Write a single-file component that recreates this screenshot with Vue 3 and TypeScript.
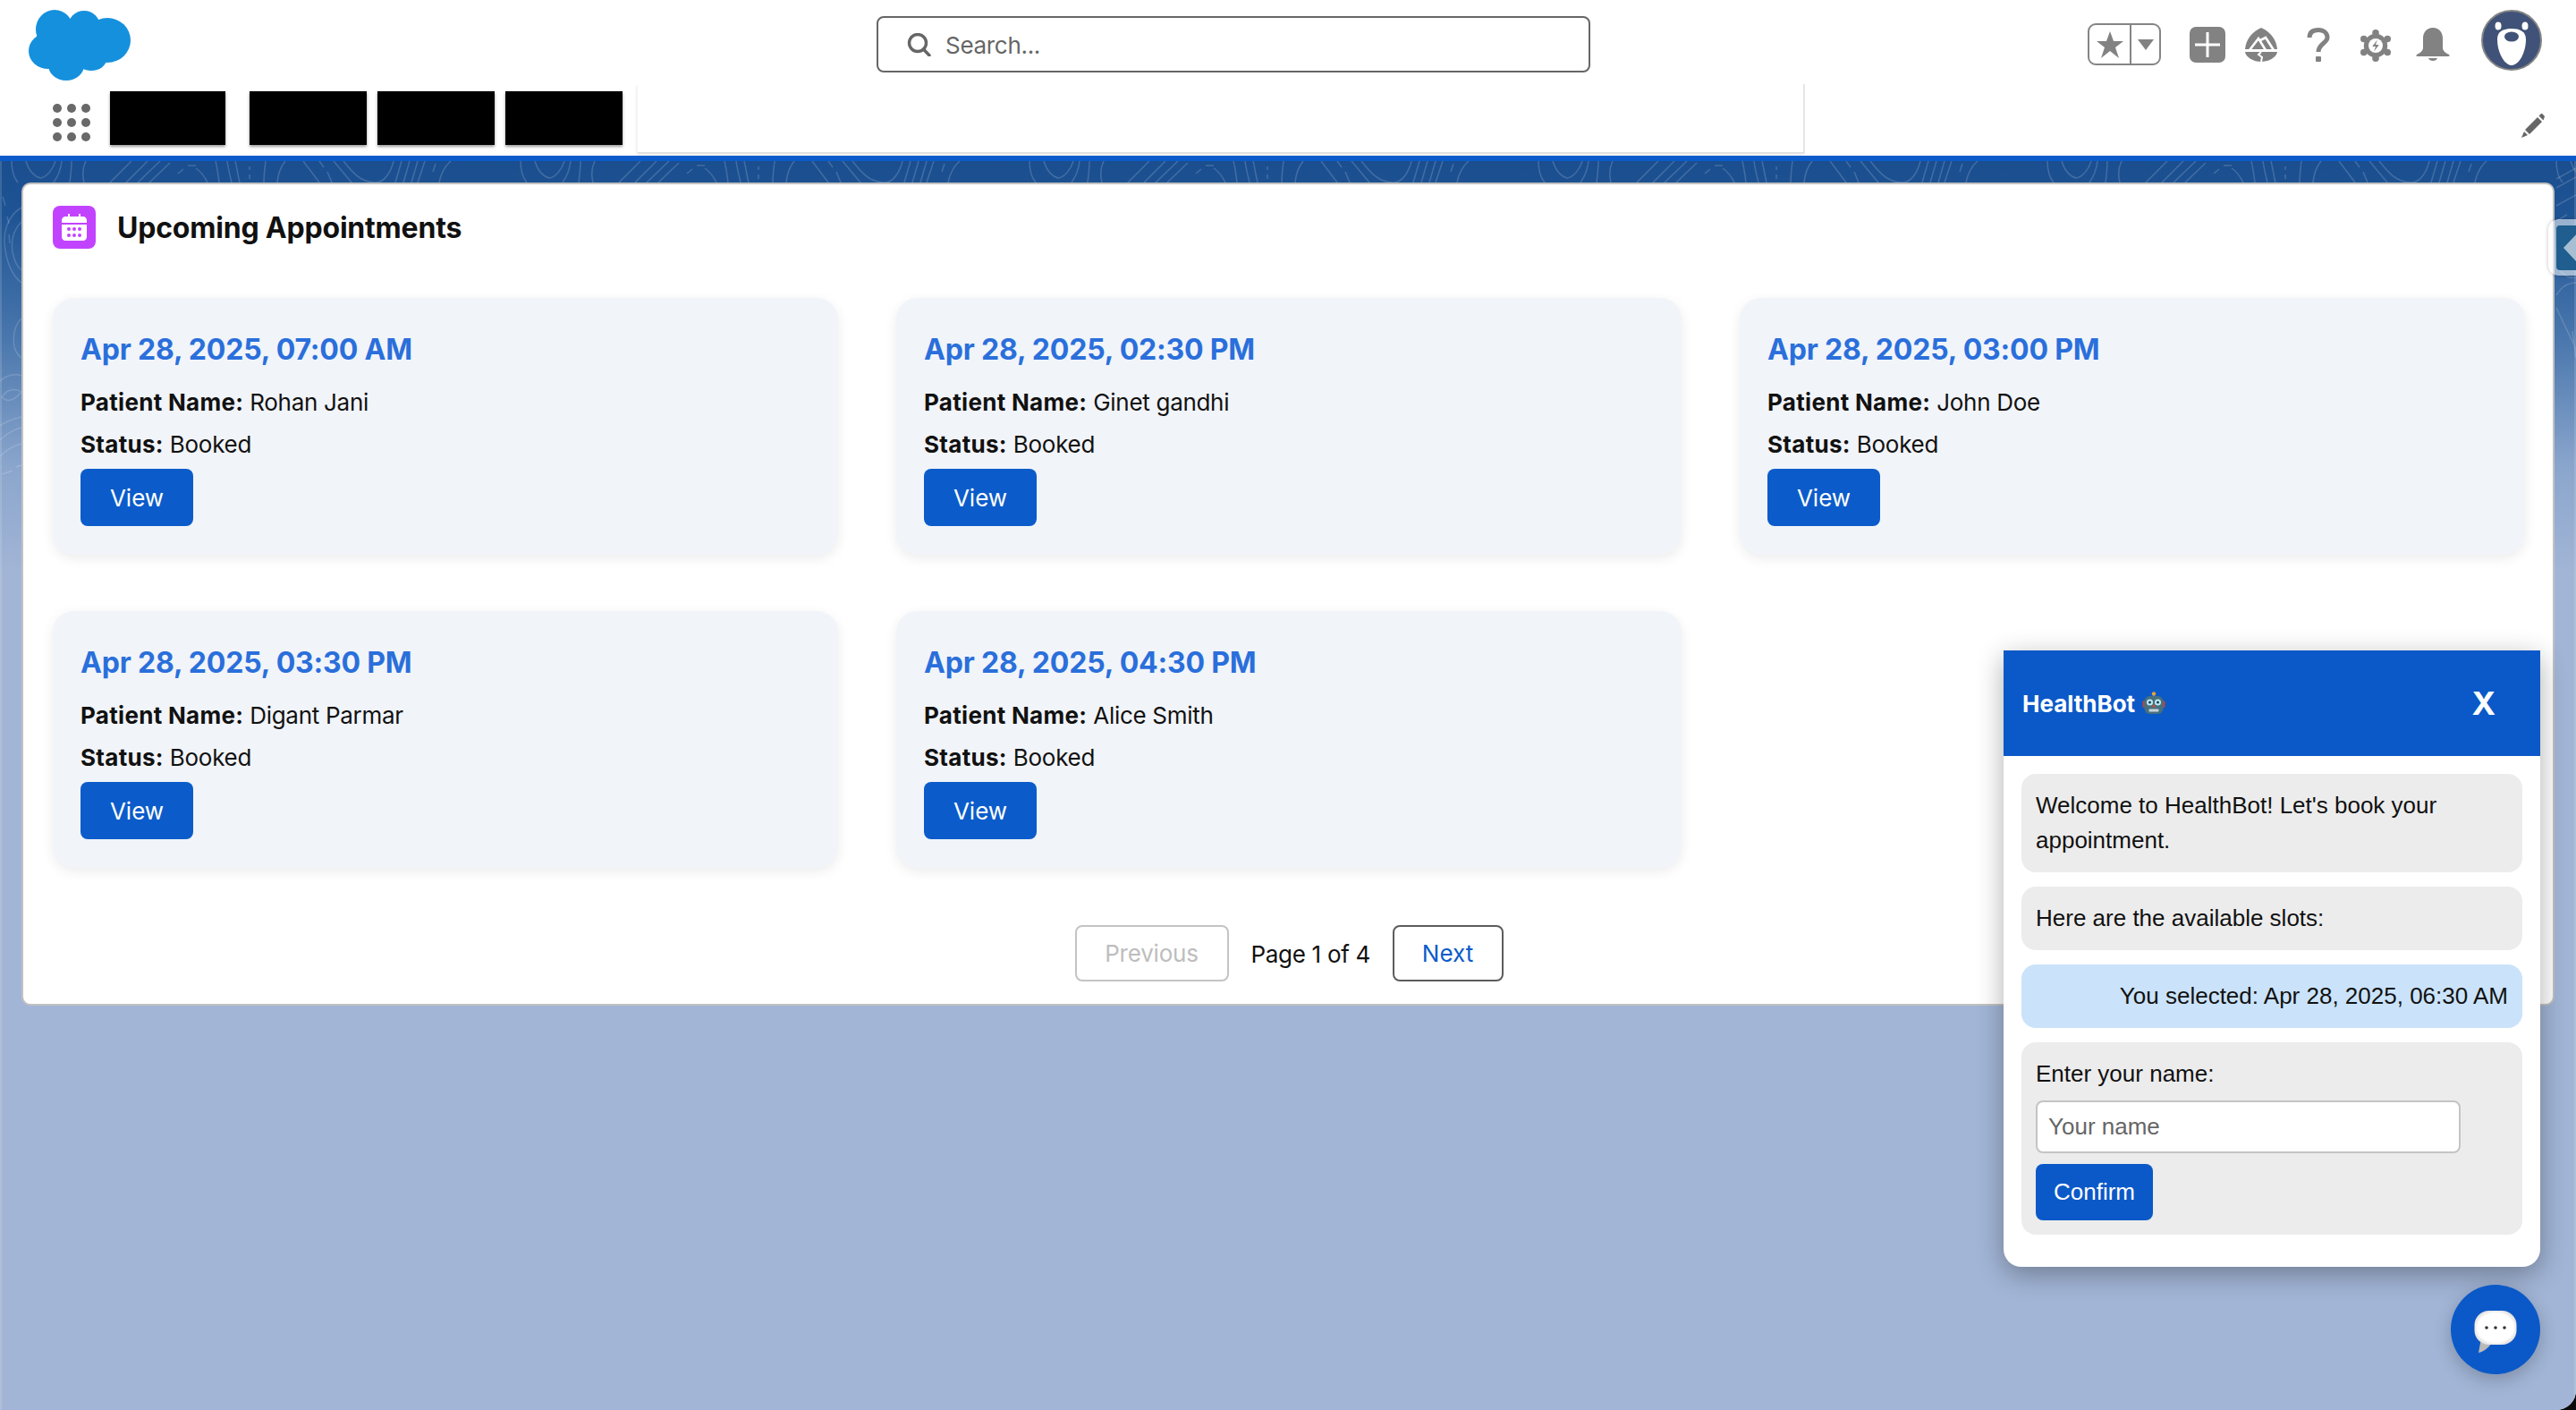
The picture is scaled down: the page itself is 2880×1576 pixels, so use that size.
<script setup lang="ts">
interface Appointment {
  when: string
  patient: string
  status: string
}

const appointments: Appointment[] = [
  { when: 'Apr 28, 2025, 07:00 AM', patient: 'Rohan Jani', status: 'Booked' },
  { when: 'Apr 28, 2025, 02:30 PM', patient: 'Ginet gandhi', status: 'Booked' },
  { when: 'Apr 28, 2025, 03:00 PM', patient: 'John Doe', status: 'Booked' },
  { when: 'Apr 28, 2025, 03:30 PM', patient: 'Digant Parmar', status: 'Booked' },
  { when: 'Apr 28, 2025, 04:30 PM', patient: 'Alice Smith', status: 'Booked' }
]

const redactedTabs = ['first', 'second', 'third', 'fourth']
const dots = Array.from({ length: 9 }, (_, i) => i)

// contour lines of the blue band, one repeat of the pattern
const topoTile = [
  'M13 0C13 10 15 18 20 24',
  'M29 0C32 10 38 17 45 19C52 18 59 10 62 0',
  'M69 0C68 9 65 17 60 24',
  'M80 0C80 8 79 16 78 24',
  'M96 0C92 8 92 16 94 24',
  'M147 0L123 24', 'M165 0L141 24', 'M179 0L154 24', 'M190 2L167 24',
  'M199 14L205 9', 'M210 5H219', 'M219 8C225 12 229 18 232 24',
  'M241 0C243 8 244 16 245 24', 'M254 0C255 8 257 16 259 24', 'M263 0C265 8 266 16 268 24',
  'M279 6V10', 'M279 15V20',
  'M297 0C296 8 295 16 295 24', 'M319 0C314 6 311 14 310 24',
  'M339 0L357 24', 'M357 0L362 7', 'M366 12L371 24', 'M373 0L393 24',
  'M384 0C392 10 402 24 420 24C430 24 437 12 440 0',
  'M449 0L442 24', 'M458 0L451 24', 'M467 0L460 24', 'M475 0L467 24',
  'M487 3L484 12', 'M504 0C497 6 493 14 491 24'
]
</script>

<template>
  <div class="app">
    <header class="top">
      <svg class="logo" width="114" height="80" viewBox="0 0 114 80">
        <g fill="#1590dd">
          <ellipse cx="29" cy="23" rx="21" ry="22" />
          <ellipse cx="62" cy="20" rx="18" ry="18" />
          <ellipse cx="88" cy="35" rx="26" ry="25" />
          <ellipse cx="22" cy="47" rx="22" ry="20" />
          <ellipse cx="42" cy="63" rx="20" ry="17" />
          <ellipse cx="70" cy="56" rx="17" ry="13" />
          <ellipse cx="50" cy="40" rx="30" ry="24" />
        </g>
      </svg>
      <div class="search">
        <svg width="28" height="26" viewBox="0 0 28 26" fill="none" stroke="#666" stroke-width="3.4">
          <circle cx="12" cy="11" r="9.5" />
          <path d="M18.5 18L25 25" stroke-linecap="round" />
        </svg>
        <span>Search...</span>
      </div>
      <div class="actions">
        <div class="fav">
          <span class="fav-star">
            <svg width="32" height="32" viewBox="0 0 32 32"><polygon fill="#828282" points="16,1 20,12 31,12 22,19 26,31 16,23 6,31 10,19 1,12 12,12" /></svg>
          </span>
          <span class="fav-more">
            <svg width="18" height="12" viewBox="0 0 18 12"><polygon fill="#828282" points="0,0 18,0 9,12" /></svg>
          </span>
        </div>
        <svg class="ic-plus" width="40" height="40" viewBox="0 0 40 40">
          <rect width="40" height="40" rx="7" fill="#828282" />
          <path d="M6 20H34M20 6V34" stroke="#fff" stroke-width="3" />
        </svg>
        <svg class="ic-peak" width="38" height="38" viewBox="0 0 38 38">
          <path fill="#828282" d="M19 0C28 4 36 12 37 24H1C2 12 10 4 19 0Z" />
          <path fill="#828282" d="M1 27H37C36 33 28 38 19 38C10 38 2 33 1 27Z" />
          <path fill="none" stroke="#fff" stroke-width="2.6" d="M6 25L16 12L24 25M18 14L24 11L33 25" />
          <path fill="none" stroke="#fff" stroke-width="2" d="M19 27L16 30L20 33L19 38" />
        </svg>
        <svg class="ic-help" width="26" height="38" viewBox="0 0 26 38">
          <path fill="none" stroke="#828282" stroke-width="5" d="M3 11C3 5 7 2.500 13 2.500C19 2.500 23 6 23 11C23 17 13 18 13 27" />
          <rect x="10" y="32" width="6" height="6" rx="1" fill="#828282" />
        </svg>
        <svg class="ic-gear" width="34" height="38" viewBox="0 0 36 38">
          <circle cx="18" cy="19" r="14" fill="#828282" />
          <circle cx="18" cy="4" r="4" fill="#828282" />
          <circle cx="18" cy="34" r="4" fill="#828282" />
          <circle cx="4" cy="11" r="4" fill="#828282" />
          <circle cx="32" cy="11" r="4" fill="#828282" />
          <circle cx="4" cy="27" r="4" fill="#828282" />
          <circle cx="32" cy="27" r="4" fill="#828282" />
          <circle cx="18" cy="19" r="8.500" fill="#fff" />
          <polygon fill="#828282" points="20,12 14,20 18,20 16,26 22,18 18,18" />
        </svg>
        <svg class="ic-bell" width="38" height="38" viewBox="0 0 38 38">
          <path fill="#828282" d="M19 0C26 0 30 5 30 12V22C30 26 33 28 37 30C38 31 38 32 36 32H2C0 32 0 31 1 30C5 28 8 26 8 22V12C8 5 12 0 19 0Z" />
          <path fill="#828282" d="M14 34H24C23 38 15 38 14 34Z" />
        </svg>
        <svg class="avatar" width="68" height="68" viewBox="0 0 68 68">
          <circle cx="34" cy="34" r="33" fill="#405277" stroke="#858585" stroke-width="2" />
          <ellipse cx="19" cy="18" rx="3.500" ry="4.500" fill="#fff" />
          <ellipse cx="49" cy="18" rx="3.500" ry="4.500" fill="#fff" />
          <path fill="#fff" d="M34 21C43 21 50 24 50 33C50 48 42 62 34 62C26 62 18 48 18 33C18 24 25 21 34 21Z" />
          <ellipse cx="34" cy="30" rx="8" ry="5.500" fill="#405277" />
        </svg>
      </div>
    </header>

    <nav class="nav">
      <div class="launcher">
        <span v-for="d in dots" :key="d" class="dot"></span>
      </div>
      <div class="tabs">
        <span v-for="t in redactedTabs" :key="t" class="redacted" :class="t"></span>
      </div>
      <div class="tab-panel"></div>
      <svg class="pencil" width="26" height="27" viewBox="0 0 26 27">
        <path fill="#666" d="M4 18L18 4L23 9L9 23ZM19.500 2.500L21.500 0.500C22.200 -0.100 23 -0.100 23.600 0.500L25.500 2.400C26.100 3 26.100 3.800 25.500 4.500L24.500 7.500ZM3 20L7 24L0 27Z" />
      </svg>
    </nav>
    <div class="accent"></div>

    <main class="page">
      <svg class="topo" width="2880" height="1000" fill="none">
        <defs>
          <pattern id="topo-band" width="569" height="24" patternUnits="userSpaceOnUse">
            <path v-for="(d, i) in topoTile" :key="i" :d="d" stroke="#fff" stroke-opacity="0.17" stroke-width="1.500" />
          </pattern>
        </defs>
        <rect width="2880" height="24" fill="url(#topo-band)" />
        <g stroke="#fff" stroke-opacity="0.16" stroke-width="1.500">
          <path d="M24 52C10 60 2 78 6 100C9 118 16 130 24 136" />
          <path d="M24 68C16 76 12 88 14 102C16 112 19 118 24 122" />
          <path d="M3 40L6 50M8 62L10 70M10 82L11 92" />
          <path d="M24 176C17 182 14 194 16 208C18 214 21 218 24 220" />
          <path d="M0 246C8 238 18 238 24 240M2 264C8 254 18 254 24 258C16 268 8 270 2 264Z" />
          <path d="M0 296C8 290 16 288 24 286M0 312C8 304 16 300 24 298M0 330C8 322 16 318 24 316M2 350L14 346M18 342L24 340" />
          <path d="M2858 30L2880 18M2858 50L2880 38M2860 66L2870 60M2858 20L2880 8" />
          <path d="M2858 150C2864 140 2872 136 2880 136M2858 118C2866 128 2874 132 2880 130" />
          <path d="M2858 164L2880 210M2876 190L2880 220" />
        </g>
      </svg>

      <section class="board">
        <div class="board-head">
          <span class="cal">
            <svg width="28" height="30" viewBox="0 0 28 30">
              <path fill="#fff" d="M7 0H9V3H19V0H21V3H24C26 3 28 5 28 7V10H0V7C0 5 2 3 4 3H7Z" />
              <path fill="#fff" d="M0 12H28V26C28 28 26 30 24 30H4C2 30 0 28 0 26Z" />
              <g fill="#c243ff">
                <circle cx="8" cy="17" r="2" />
                <circle cx="14" cy="17" r="2" />
                <circle cx="20" cy="17" r="2" />
                <circle cx="8" cy="24" r="2" />
                <circle cx="14" cy="24" r="2" />
                <circle cx="20" cy="24" r="2" />
              </g>
            </svg>
          </span>
          <h1>Upcoming Appointments</h1>
        </div>

        <div class="grid">
          <article v-for="a in appointments" :key="a.when" class="appt">
            <h2>{{ a.when }}</h2>
            <p><strong>Patient Name:</strong> {{ a.patient }}</p>
            <p><strong>Status:</strong> {{ a.status }}</p>
            <button class="view" type="button">View</button>
          </article>
        </div>

        <div class="pager">
          <button class="pg prev" type="button">Previous</button>
          <span class="pg-label">Page 1 of 4</span>
          <button class="pg next" type="button">Next</button>
        </div>
      </section>

      <div class="handle"><span class="handle-in"><i></i></span></div>
    </main>

    <aside class="chat">
      <div class="chat-head">
        <span class="chat-title">
          HealthBot
          <svg width="26" height="26" viewBox="0 0 26 26">
            <circle cx="13" cy="2.500" r="2.200" fill="#e8a33a" />
            <rect x="0.500" y="10" width="3" height="8" rx="1.500" fill="#b5483d" />
            <rect x="22.500" y="10" width="3" height="8" rx="1.500" fill="#b5483d" />
            <rect x="2.500" y="5" width="21" height="20" rx="6" fill="#47707f" />
            <circle cx="8.500" cy="12" r="3.500" fill="#bdeaf5" />
            <circle cx="17.500" cy="12" r="3.500" fill="#bdeaf5" />
            <circle cx="8.500" cy="12" r="1.500" fill="#1b3f4c" />
            <circle cx="17.500" cy="12" r="1.500" fill="#1b3f4c" />
            <polygon points="13,14 15,17.500 11,17.500" fill="#d9473b" />
            <rect x="7.500" y="19.500" width="11" height="3" rx="1" fill="#c7d3d6" />
          </svg>
        </span>
        <span class="chat-close">X</span>
      </div>
      <div class="chat-body">
        <div class="bubble">Welcome to HealthBot! Let's book your appointment.</div>
        <div class="bubble">Here are the available slots:</div>
        <div class="bubble mine">You selected: Apr 28, 2025, 06:30 AM</div>
        <div class="bubble">
          <label for="bot-name">Enter your name:</label>
          <input id="bot-name" type="text" placeholder="Your name" />
          <button class="confirm" type="button">Confirm</button>
        </div>
      </div>
    </aside>

    <button class="fab" type="button" aria-label="Open chat">
      <svg width="48" height="50" viewBox="0 0 48 50">
        <defs>
          <radialGradient id="fab-bubble" cx="50%" cy="50%" r="60%">
            <stop offset="70%" stop-color="#fff" />
            <stop offset="100%" stop-color="#cfcfcf" />
          </radialGradient>
        </defs>
        <path fill="#b9b9b9" d="M8 32L5 48C10 47 16 43 19 38Z" />
        <rect x="0.500" y="1" width="47" height="38" rx="16" fill="url(#fab-bubble)" />
        <circle cx="14" cy="20" r="1.800" fill="#333" />
        <circle cx="24" cy="20" r="1.800" fill="#333" />
        <circle cx="34" cy="20" r="1.800" fill="#333" />
      </svg>
    </button>
  </div>
</template>

<style scoped>
.app {
  position: relative;
  width: 2880px;
  height: 1576px;
  display: flex;
  flex-direction: column;
  overflow: hidden;
  background: #fff;
  border-bottom-right-radius: 22px;
  font-family: Inter, "Liberation Sans", sans-serif;
  color: #111;
}

.top {
  height: 94px;
  flex: none;
  display: grid;
  grid-template-columns: 980px 798px 1fr;
  align-items: center;
}

.logo {
  margin-left: 32px;
  margin-top: 6px;
}

.search {
  height: 63px;
  box-sizing: border-box;
  margin-top: 5px;
  padding-left: 32px;
  display: flex;
  align-items: center;
  gap: 15px;
  border: 2px solid #666;
  border-radius: 8px;
  font-size: 26px;
  letter-spacing: -0.3px;
  color: #666;
}

.search span {
  position: relative;
  top: 1px;
}

.actions {
  display: flex;
  align-items: center;
  justify-content: flex-end;
  padding-right: 38px;
}

.fav {
  width: 82px;
  height: 47px;
  box-sizing: border-box;
  margin-top: 5px;
  display: flex;
  border: 2px solid #858585;
  border-radius: 9px;
}

.fav-star {
  width: 45px;
  display: flex;
  align-items: center;
  justify-content: center;
  border-right: 2px solid #858585;
}

.fav-more {
  flex: 1;
  display: flex;
  align-items: center;
  justify-content: center;
}

.ic-plus { margin-left: 32px; margin-top: 6px; }
.ic-peak { margin-left: 21px; margin-top: 6px; }
.ic-help { margin-left: 32px; margin-top: 6px; }
.ic-gear { margin-left: 34px; margin-top: 8px; }
.ic-bell { margin-left: 28px; margin-top: 5px; }
.avatar { margin-left: 35px; margin-top: -4px; }

.nav {
  height: 80px;
  flex: none;
  display: flex;
  align-items: flex-start;
}

.launcher {
  width: 42px;
  margin: 22px 0 0 59px;
  display: grid;
  grid-template-columns: repeat(3, 10px);
  column-gap: 6px;
  row-gap: 6px;
}

.dot {
  height: 10px;
  border-radius: 50%;
  background: #696969;
}

.tabs {
  margin: 8px 0 0 22px;
  display: flex;
  gap: 12px;
}

.redacted {
  width: 131px;
  height: 60px;
  background: #000;
  box-shadow: 0 2px 3px rgba(0, 0, 0, 0.4);
}

.redacted.first {
  width: 129px;
  margin-right: 15px;
}

.tab-panel {
  width: 1305px;
  height: 78px;
  margin-left: 17px;
  box-sizing: border-box;
  border-right: 2px solid #e6e6e6;
  border-bottom: 2px solid #e0e0e0;
  box-shadow: -2px 2px 3px rgba(0, 0, 0, 0.06);
}

.pencil {
  margin: 33px 0 0 801px;
}

.accent {
  height: 6px;
  flex: none;
  background: #0b5cca;
}

.page {
  position: relative;
  flex: 1;
  padding: 24px;
  background: linear-gradient(180deg, #1a4e8f 0, #1f5494 60px, #4a77ad 200px, #8aa5cc 340px, #a2b5d6 460px, #a2b5d6 100%);
  box-shadow: inset 2px 0 0 rgba(255, 255, 255, 0.14), inset -2px 0 0 rgba(255, 255, 255, 0.14);
}

.topo {
  position: absolute;
  left: 0;
  top: 0;
}

.board {
  position: relative;
  background: #fff;
  border: 2px solid #c2c2c2;
  border-radius: 10px;
  padding: 24px 31px 25px 33px;
}

.board-head {
  display: flex;
  align-items: center;
  gap: 24px;
  margin-bottom: 55px;
}

.cal {
  width: 48px;
  height: 48px;
  display: flex;
  align-items: center;
  justify-content: center;
  border-radius: 8px;
  background: #c243ff;
}

h1 {
  margin: 0;
  padding-top: 2px;
  font-size: 32px;
  font-weight: 700;
  line-height: 46px;
  letter-spacing: -0.2px;
}

.grid {
  display: grid;
  grid-template-columns: repeat(3, 1fr);
  column-gap: 65px;
  row-gap: 63px;
}

.appt {
  height: 287px;
  box-sizing: border-box;
  padding: 32px 31px;
  background: #f1f4f9;
  border-radius: 24px;
  box-shadow: 0 4px 14px rgba(0, 0, 0, 0.08);
}

.appt h2 {
  margin: 0 0 13px;
  font-size: 32px;
  font-weight: 700;
  line-height: 52px;
  letter-spacing: -0.18px;
  color: #2a6fdb;
}

.appt p {
  margin: 0 0 8px;
  font-size: 26px;
  line-height: 39px;
  letter-spacing: -0.3px;
}

.appt strong {
  font-weight: 700;
  letter-spacing: 0.3px;
}

.view {
  width: 126px;
  height: 64px;
  padding: 0;
  border: none;
  border-radius: 8px;
  background: #0b5cca;
  color: #fff;
  font: 26px Inter, "Liberation Sans", sans-serif;
}

.pager {
  margin-top: 64px;
  display: flex;
  align-items: center;
  justify-content: center;
  gap: 25px;
  font-size: 26px;
}

.pg-label {
  width: 133px;
  white-space: nowrap;
  letter-spacing: -0.3px;
  position: relative;
  top: 1px;
}

.pg {
  height: 63px;
  padding: 0;
  background: #fff;
  border-radius: 8px;
  font: 26px Inter, "Liberation Sans", sans-serif;
}

.prev {
  width: 172px;
  border: 2px solid #c4c4c4;
  color: #bdbdbd;
  letter-spacing: -0.2px;
}

.next {
  width: 124px;
  border: 2px solid #5c5c5c;
  color: #0b5cca;
}

.handle {
  position: absolute;
  right: 0;
  top: 65px;
  width: 31px;
  height: 63px;
  box-sizing: border-box;
  padding: 7px 0 6px 9px;
  background: rgba(255, 255, 255, 0.55);
  border-radius: 12px 0 0 12px;
  box-shadow: 0 0 4px rgba(0, 0, 0, 0.25);
}

.handle-in {
  display: block;
  height: 100%;
  position: relative;
  overflow: hidden;
  background: #1f5e8e;
  border-radius: 4px 0 0 4px;
}

.handle-in i {
  position: absolute;
  left: 8px;
  top: 8px;
  border-style: solid;
  border-width: 17px 16px 17px 0;
  border-color: transparent rgba(225, 232, 240, 0.7) transparent transparent;
}

.chat {
  position: absolute;
  left: 2240px;
  top: 727px;
  width: 600px;
  background: #fff;
  border-radius: 0 0 20px 20px;
  box-shadow: 0 8px 30px rgba(0, 0, 0, 0.32);
  font-family: "Liberation Sans", Arial, sans-serif;
  font-size: 26px;
  line-height: 39px;
  color: #111;
}

.chat-head {
  height: 118px;
  padding: 0 50px 0 21px;
  display: flex;
  align-items: center;
  justify-content: space-between;
  background: #0b59c8;
  color: #fff;
  font-family: Inter, "Liberation Sans", sans-serif;
}

.chat-title {
  display: flex;
  align-items: center;
  gap: 8px;
  font-size: 26px;
  font-weight: 700;
}

.chat-close {
  font-size: 36px;
  font-weight: 700;
}

.chat-body {
  padding: 20px 20px 36px;
  display: flex;
  flex-direction: column;
  gap: 16px;
}

.bubble {
  padding: 16px;
  background: #ececec;
  border-radius: 16px;
}

.bubble label {
  display: block;
}

.mine {
  background: #cae3fa;
  text-align: right;
}

.bubble input {
  display: block;
  width: 475px;
  height: 59px;
  box-sizing: border-box;
  margin-top: 10px;
  padding: 0 12px;
  border: 2px solid #c4c4c4;
  border-radius: 8px;
  background: #fff;
  font: 26px "Liberation Sans", Arial, sans-serif;
}

.bubble input::placeholder {
  color: #666;
  opacity: 1;
}

.confirm {
  display: block;
  width: 131px;
  height: 63px;
  margin-top: 12px;
  padding: 0;
  border: none;
  border-radius: 8px;
  background: #0b59c8;
  color: #fff;
  font: 26px "Liberation Sans", Arial, sans-serif;
}

.fab {
  position: absolute;
  left: 2740px;
  top: 1436px;
  width: 100px;
  height: 100px;
  padding: 0;
  display: flex;
  align-items: center;
  justify-content: center;
  border: none;
  border-radius: 50%;
  background: #0b59c8;
  box-shadow: 0 6px 20px rgba(0, 0, 0, 0.22);
}

.fab svg {
  margin-top: 6px;
  filter: blur(0.7px);
}
</style>

<style>
html {
  background: #0a0a0a;
}

body {
  margin: 0;
}
</style>
